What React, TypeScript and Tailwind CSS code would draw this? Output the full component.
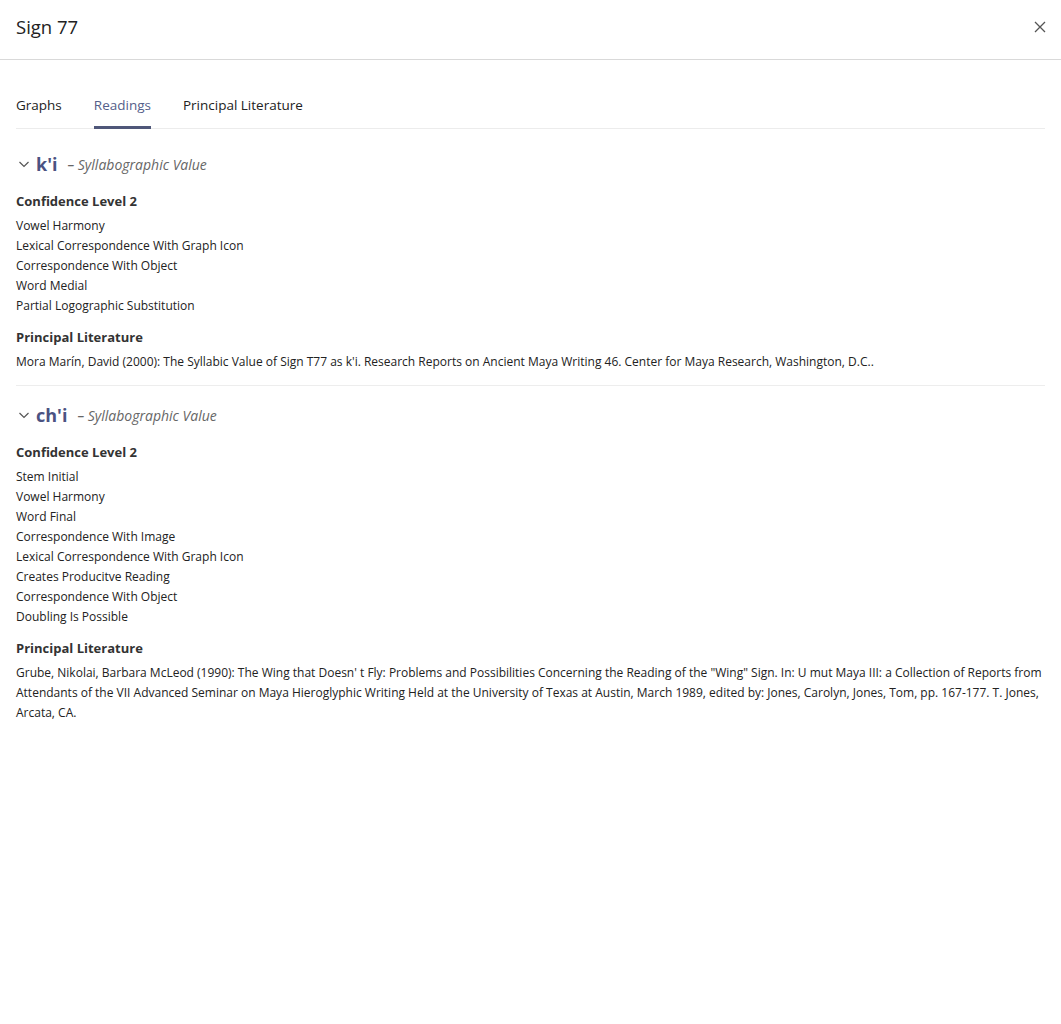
import React from 'react';

type Reading = {
  value: string;
  kind: string;
  confidence: string;
  criteria: string[];
  literature: string;
};

const readings: Reading[] = [
  {
    value: "k'i",
    kind: 'Syllabographic Value',
    confidence: 'Confidence Level 2',
    criteria: [
      'Vowel Harmony',
      'Lexical Correspondence With Graph Icon',
      'Correspondence With Object',
      'Word Medial',
      'Partial Logographic Substitution',
    ],
    literature:
      "Mora Marín, David (2000): The Syllabic Value of Sign T77 as k'i. Research Reports on Ancient Maya Writing 46. Center for Maya Research, Washington, D.C..",
  },
  {
    value: "ch'i",
    kind: 'Syllabographic Value',
    confidence: 'Confidence Level 2',
    criteria: [
      'Stem Initial',
      'Vowel Harmony',
      'Word Final',
      'Correspondence With Image',
      'Lexical Correspondence With Graph Icon',
      'Creates Producitve Reading',
      'Correspondence With Object',
      'Doubling Is Possible',
    ],
    literature:
      'Grube, Nikolai, Barbara McLeod (1990): The Wing that Doesn\' t Fly: Problems and Possibilities Concerning the Reading of the "Wing" Sign. In: U mut Maya III: a Collection of Reports from Attendants of the VII Advanced Seminar on Maya Hieroglyphic Writing Held at the University of Texas at Austin, March 1989, edited by: Jones, Carolyn, Jones, Tom, pp. 167-177. T. Jones, Arcata, CA.',
  },
];

const tabs = ['Graphs', 'Readings', 'Principal Literature'];

function ReadingBlock({ r, last }: { r: Reading; last: boolean }) {
  return (
    <div className={last ? 'pt-[16px]' : 'pt-[16px] pb-[13px] border-b border-[#ededed]'}>
      <div className="flex items-center h-[26px]">
        <svg width="12" height="12" viewBox="0 0 12 12" className="ml-[2px] mr-[6px]" fill="none" stroke="#555" strokeWidth="1.2">
          <path d="M1.5 4l4.5 4.5L10.5 4" />
        </svg>
        <span className="text-[18px] font-bold text-[#4b5282] leading-none">{r.value}</span>
        <span className="ml-[10px] text-[14px] italic text-[#666]">– {r.kind}</span>
      </div>
      <div className="mt-[14px] text-[13px] font-bold text-[#333] leading-[20px]">{r.confidence}</div>
      <ul className="mt-[5px]">
        {r.criteria.map((c) => (
          <li key={c} className="text-[12px] leading-[20px] text-[#222]">{c}</li>
        ))}
      </ul>
      <div className="mt-[11px] text-[13px] font-bold text-[#333] leading-[20px]">Principal Literature</div>
      <p className="mt-[5px] text-[12px] leading-[20px] text-[#222]">{r.literature}</p>
    </div>
  );
}

export default function App() {
  return (
    <div className="min-h-[1024px] bg-white font-['Open_Sans',sans-serif] text-[#222]">
      <header className="h-[60px] flex items-center justify-between pl-4 pr-[9px] pb-[5px] border-b border-[#d9d9d9]">
        <h1 className="text-[18.5px] text-[#222]">Sign 77</h1>
        <button className="w-6 h-6 flex items-center justify-center">
          <svg width="12" height="12" viewBox="0 0 12 12" stroke="#555" strokeWidth="1.3">
            <path d="M1 1l10 10M11 1L1 11" />
          </svg>
        </button>
      </header>

      <div className="px-4 pt-[35px]">
        <nav className="flex gap-8 border-b border-[#ececec]">
          {tabs.map((t) => (
            <div
              key={t}
              className={
                t === 'Readings'
                  ? 'pb-[10px] text-[13.5px] leading-[20px] text-[#55608a] border-b-[3px] border-[#4f5779] -mb-[1px]'
                  : 'pb-[13px] text-[13.5px] leading-[20px] text-[#222]'
              }
            >
              {t}
            </div>
          ))}
        </nav>

        <div className="pt-[6px]">
          {readings.map((r, i) => (
            <ReadingBlock key={r.value} r={r} last={i === readings.length - 1} />
          ))}
        </div>
      </div>
    </div>
  );
}
